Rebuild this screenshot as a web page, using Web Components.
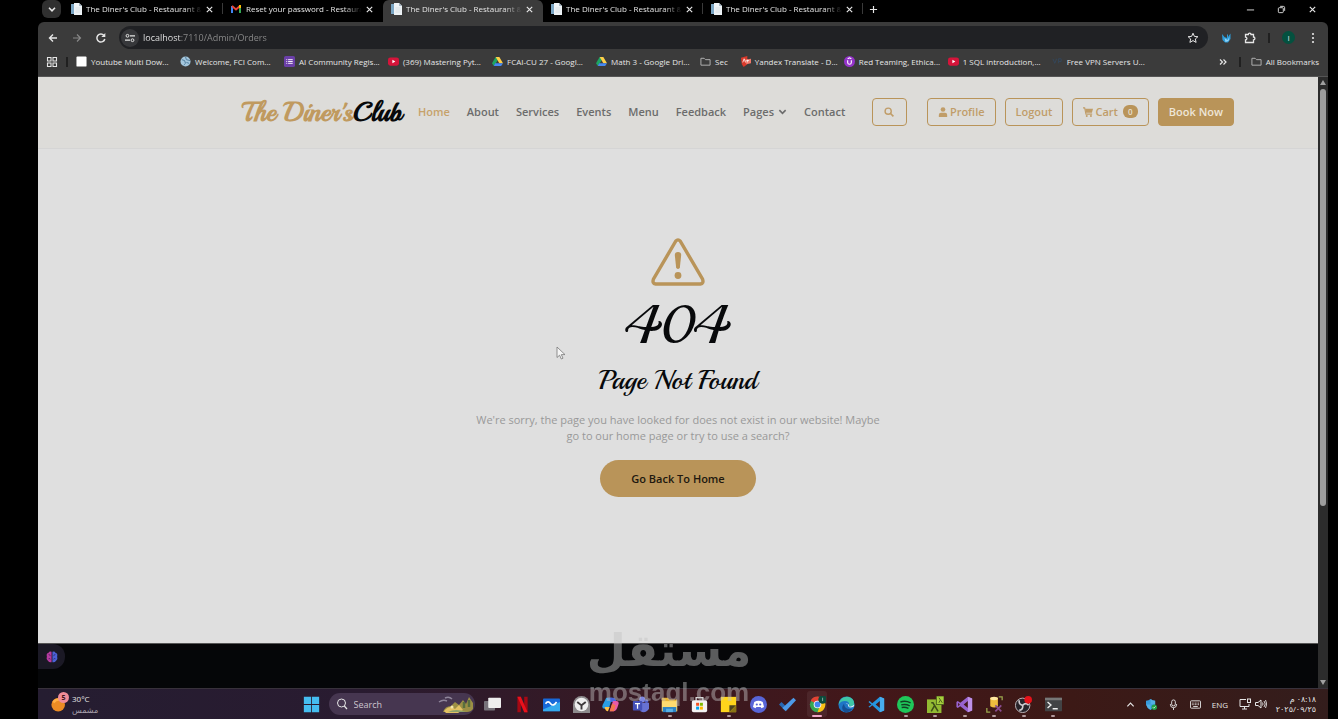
<!DOCTYPE html>
<html lang="en">
<head>
<meta charset="utf-8">
<meta name="viewport" content="width=device-width, initial-scale=1">
<title>The Diner's Club - Restaurant</title>
<style>
  body {
    margin: 0;
    background: #000;
    color: #e6e6e6;
    font-family: "Open Sans", "Noto Sans", sans-serif;
  }
</style>
</head>
<body>
<desktop-screen></desktop-screen>

<script>
const ICONS = {
  chevron: ['0 0 10 10', '<path d="M2.5 4 5 6.5 7.5 4" fill="none" stroke="currentColor" stroke-width="1.3"/>'],
  chevronUp: ['0 0 10 10', '<path d="M1.5 7 5 3.5 8.5 7" fill="none" stroke="currentColor" stroke-width="1.3"/>'],
  close: ['0 0 10 10', '<path d="M2 2l6 6M8 2 2 8" stroke="currentColor" stroke-width="1.3"/>'],
  plus: ['0 0 10 10', '<path d="M5 1v8M1 5h8" stroke="currentColor" stroke-width="1.3"/>'],
  minimize: ['0 0 10 10', '<path d="M1 5.5h8" stroke="currentColor"/>'],
  restore: ['0 0 10 10', '<rect x="1.5" y="3" width="5.500" height="5.500" rx="1" fill="none" stroke="currentColor"/><path d="M3.500 1.500H7q1.500 0 1.500 1.500v3.500" fill="none" stroke="currentColor"/>'],
  page: ['0 0 12 12', '<path d="M1 1h3v10H1z" fill="#7ba6c4"/><path d="M4 0h5l3 3v9H4z" fill="#eef3f6"/><path d="M9 0v3h3" fill="#a9bac6"/><path d="M5.500 5h5M5.500 7h5M5.500 9h5" stroke="#cfd8de" stroke-width=".6"/>'],
  gmail: ['0 0 12 12', '<path d="M2 10V3" stroke="#4285f4" stroke-width="2"/><path d="M10 10V3" stroke="#34a853" stroke-width="2"/><path d="M2 3l4 3.500L10 3" fill="none" stroke="#ea4335" stroke-width="2"/><path d="M9 2h2v3H9z" fill="#fbbc04"/>'],
  back: ['0 0 12 12', '<path d="M10 6H2.500M6 2.500 2.500 6 6 9.500" fill="none" stroke="currentColor" stroke-width="1.400"/>'],
  forward: ['0 0 12 12', '<path d="M2 6h7.500M6 2.500 9.500 6 6 9.500" fill="none" stroke="currentColor" stroke-width="1.200"/>'],
  reload: ['0 0 12 12', '<path d="M9.800 7A4 4 0 1 1 9 3.500" fill="none" stroke="currentColor" stroke-width="1.500"/><path d="M10.300 1v4h-4z" fill="currentColor"/>'],
  tune: ['0 0 12 12', '<circle cx="3.500" cy="3.800" r="1.400" fill="none" stroke="currentColor"/><path d="M6 3.800h5M1 8.200h5" stroke="currentColor" stroke-width="1.200"/><circle cx="8.500" cy="8.200" r="1.400" fill="none" stroke="currentColor"/>'],
  star: ['0 0 12 12', '<path d="M6 1.200 7.400 4.400l3.500.3-2.600 2.300.8 3.400L6 8.600l-3.100 1.800.8-3.400L1.100 4.700l3.500-.3z" fill="none" stroke="currentColor"/>'],
  fox: ['0 0 12 12', '<path d="M2 2l2.500 3L7 6V3l1-1v3l2.500-3.500L10.500 7 8 10.500H5L2.500 8z" fill="#2d9cd8"/><path d="M4.500 6l3 2 2-3-1 4-3 1z" fill="#93d3f5"/>'],
  puzzle: ['0 0 12 12', '<path d="M1.500 2.500H4.300A1.300 1.300 0 0 1 7 2.500H9.500V5A1.300 1.300 0 0 1 9.500 7.800V10.500H1.500V8A1.300 1.300 0 0 0 1.500 5.200z" fill="none" stroke="currentColor" stroke-width="1.300"/>'],
  dots: ['0 0 12 12', '<circle cx="6" cy="2" r="1.100" fill="currentColor"/><circle cx="6" cy="6" r="1.100" fill="currentColor"/><circle cx="6" cy="10" r="1.100" fill="currentColor"/>'],
  grid: ['0 0 12 12', '<path d="M1.500 1.500h3.500V5H1.500zM7 1.500h3.500V5H7zM1.500 7h3.500v3.500H1.500zM7 7h3.500v3.500H7z" fill="none" stroke="currentColor" stroke-width="1.100"/>'],
  more: ['0 0 12 12', '<path d="M3 3.500 5.500 6 3 8.500M6.500 3.500 9 6 6.500 8.500" fill="none" stroke="currentColor" stroke-width="1.200"/>'],
  folder: ['0 0 12 12', '<path d="M1 2.500h3.500L6 4h5v6H1z" fill="none" stroke="#b8b8b8"/>'],
  blank: ['0 0 12 12', '<rect x=".5" y=".5" width="11" height="11" rx="1" fill="#fff"/>'],
  globe: ['0 0 12 12', '<circle cx="6" cy="6" r="5.500" fill="#a4c6dc"/><path d="M2 4l3 1 1 3-2 2M6 1l1 3 4 1M7 7l3 1" fill="none" stroke="#4a7899"/>'],
  form: ['0 0 12 12', '<rect width="12" height="12" rx="2" fill="#6b3fa8"/><path d="M2.500 4h1M2.500 6h1M2.500 8h1M4.500 4h5M4.500 6h5M4.500 8h5" stroke="#fff"/>'],
  youtube: ['0 0 12 12', '<rect y="1.500" width="12" height="9" rx="2.500" fill="#d5143a"/><path d="M4.800 4 8 6 4.800 8z" fill="#fff"/>'],
  drive: ['0 0 12 12', '<path d="M4 1h4L4.200 8 2 11 0 8z" fill="#1da462"/><path d="M4 1h4l4 7H8z" fill="#ffcf48"/><path d="M3.500 8H12l-2 3H2z" fill="#4688f1"/>'],
  yandex: ['0 0 12 12', '<path d="M1 2l7-2v9l-4 3-2-3z" fill="#d8392b"/><path d="M5 4l7-1v5l-5 1z" fill="#ef7769"/><path d="M3 7l1.500-4L6 7M8 4v3M7 5h3" fill="none" stroke="#fff" stroke-width=".8"/>'],
  udemy: ['0 0 12 12', '<circle cx="6" cy="6" r="6" fill="#9333c9"/><path d="M4 4.500V7a2 2 0 0 0 4 0V4.500M4 3l2-1 2 1" fill="none" stroke="#fff" stroke-width="1.200"/>'],
  vpn: ['0 0 12 12', '<path d="M1 3l2 5 2-5M7 8V3h3v3H7" fill="none" stroke="#33475c"/>'],
  search: ['0 0 12 12', '<circle cx="5" cy="5" r="3.700" fill="none" stroke="currentColor" stroke-width="1.700"/><path d="M7.500 7.500 11.300 11.300" stroke="currentColor" stroke-width="2"/>'],
  find: ['0 0 12 12', '<circle cx="5.500" cy="5" r="4" fill="none" stroke="currentColor"/><path d="M8.300 8 11 11" stroke="currentColor" stroke-width="1.200"/>'],
  caret: ['0 0 10 10', '<path d="M1.500 3.500 5 7l3.500-3.500" fill="none" stroke="currentColor" stroke-width="1.800"/>'],
  user: ['0 0 12 12', '<circle cx="6" cy="3" r="2.800" fill="currentColor"/><path d="M1 12v-2.500Q1 7 3.500 7h5Q11 7 11 9.500V12z" fill="currentColor"/>'],
  cart: ['0 0 12 12', '<path d="M0 1h2l1.500 7.500H11" fill="none" stroke="currentColor" stroke-width="1.300"/><path d="M2.500 2H12l-1.300 5H3.500z" fill="currentColor"/><circle cx="4.500" cy="10.700" r="1.200" fill="currentColor"/><circle cx="9.500" cy="10.700" r="1.200" fill="currentColor"/>'],
  warning: ['0 0 54 48', '<path d="M24.700 3.200q2.300-2.600 4.600 0l22.300 38q1.400 4.300-2.200 4.800H4.600Q1 45.500 2.400 41.200z" fill="none" stroke="currentColor" stroke-width="3.400"/><path d="M23.800 17q0-3 3.200-3t3.200 3l-1.300 12.200q-.3 1.800-1.900 1.800t-1.900-1.800z" fill="currentColor"/><circle cx="27" cy="37.500" r="3.400" fill="currentColor"/>'],
  cursor: ['0 0 10 14', '<path d="M1 1v10.500l2.600-2.300 1.700 3.800 1.700-.8-1.700-3.600H9z" fill="#f5f5f5" stroke="#777" stroke-width=".8"/>'],
  brain: ['0 0 14 14', '<path d="M6.500 1Q4 0 3 2 0 3 1 6q-1 3 1 5 2 3 4.500 2z" fill="#b63aa0"/><path d="M7.500 1Q10 0 11 2q3 1 2 4 1 3-1 5-2 3-4.500 2z" fill="#4b62d6"/><path d="M3 4q2 0 2 2M3 9q2-1 2 1M11 4q-2 0-2 2M11 9q-2-1-2 1" fill="none" stroke="#2b1c4c" stroke-width=".7"/>'],
  windows: ['0 0 20 20', '<path d="M1 1h8.500v8.500H1zM10.500 1H19v8.500h-8.500zM1 10.500h8.500V19H1zM10.500 10.500H19V19h-8.500z" fill="#45bdf0"/>'],
  island: ['0 0 36 18', '<path d="M5 17q2-6 8-6l4-4 4 3 4-5 3 4 3-7 2 3 2 3v6q-2 3-6 3z" fill="#9c8f45"/><path d="M6 16q6-7 11-2l4-4 4 5-5 3H8z" fill="#e2c163"/><path d="M10 17q8-4 18 0z" fill="#8fa36a"/><path d="M1 7q4-3 8-1M7 3q4-2 7 1" stroke="#8f859a" stroke-width="1.500" fill="none"/><path d="M26 7v6M31 5v7" stroke="#596f3e" stroke-width="2.500"/><circle cx="14" cy="12" r="1.500" fill="#f4e5ad"/>'],
  taskview: ['0 0 20 20', '<rect x="0" y="6" width="13" height="11" rx="1" fill="#77727a"/><rect x="5" y="2" width="15" height="12" rx="1" fill="#eee"/>'],
  netflix: ['0 0 20 20', '<path d="M6 1v18M14 1v18" stroke="#a50914" stroke-width="4"/><path d="M4 1h4l8 18h-4z" fill="#ea111c"/>'],
  board: ['0 0 20 20', '<rect x="0" y="3" width="20" height="15" rx="1" fill="#1768d8"/><path d="M0 16 20 7v10q0 1-1 1H1q-1 0-1-1z" fill="#35a9ed"/><path d="M3 9q3-4 6 0 3 4 7-2" fill="none" stroke="#fff" stroke-width="2"/>'],
  clock: ['0 0 20 20', '<path d="M0 10a10 10 0 0 1 20 0v10H0z" fill="#8e8b8d"/><circle cx="10" cy="10" r="8" fill="#eee"/><path d="M10 16v-5L5 7M10 11l5-4" fill="none" stroke="#3d393b" stroke-width="2.200"/>'],
  copilot: ['0 0 20 20', '<path d="M5 2h7l-4 13H3q-4 0-2-5z" fill="#2a9ee5"/><path d="M7 2h6q3 0 4 5h-6z" fill="#4968dd"/><path d="M9 18h5q3 0 5-7 2-5-2-5h-4z" fill="#e85aa8"/><path d="M3 13h6l-2 5Q4 18 3 13z" fill="#ffc247"/><path d="M12 9l-3 9h5l2-7z" fill="#f2774d"/>'],
  teams: ['0 0 20 20', '<circle cx="12" cy="4" r="3.500" fill="#7e86e0"/><circle cx="17" cy="6" r="2.300" fill="#5460c8"/><path d="M8 8h12v7q-4 6-10 3z" fill="#6872d4"/><rect x="1" y="6" width="11" height="11" rx="1" fill="#4450b8"/><path d="M3.500 9h6M6.500 9v6" stroke="#fff" stroke-width="1.500"/>'],
  explorer: ['0 0 20 20', '<path d="M1 2h7l2 2h9v14H1z" fill="#e9b32f"/><path d="M1 6h18v12H1z" fill="#ffdb70"/><path d="M2 13h16v6H2z" fill="#2c83c5"/><path d="M6 15h8v4H6z" fill="#57b1e8"/>'],
  store: ['0 0 20 20', '<path d="M6 6V2h8v4" fill="none" stroke="#ddd" stroke-width="1.500"/><rect x="1" y="5" width="18" height="14" rx="2" fill="#f4f2f2"/><path d="M6 8h3.500v3.500H6z" fill="#f25022"/><path d="M10.500 8H14v3.500h-3.500z" fill="#7fba00"/><path d="M6 12.500h3.500V16H6z" fill="#00a4ef"/><path d="M10.500 12.500H14V16h-3.500z" fill="#ffb900"/>'],
  notes: ['0 0 20 20', '<path d="M1 1h18v18H1z" fill="#ffd51c"/><path d="M11 11h8l-8 8z" fill="#4b4320"/><path d="M19 11v8h-8z" fill="#8a7415"/>'],
  discord: ['0 0 20 20', '<circle cx="10" cy="10" r="10" fill="#5865d8"/><path d="M5 7q5-3 10 0l1.500 6-3 1.500-1-1.500h-5l-1 1.500-3-1.500z" fill="#fff"/><circle cx="8" cy="10" r="1.300" fill="#5865d8"/><circle cx="12" cy="10" r="1.300" fill="#5865d8"/>'],
  todo: ['0 0 20 20', '<path d="M0 10l3-3 5 5-1 5z" fill="#2768b4"/><path d="M4 14l4 4L20 5l-3-3z" fill="#4d9ae8"/>'],
  chrome: ['0 0 20 20', '<circle cx="10" cy="10" r="9" fill="#35a853"/><path d="M2 5.500A9 9 0 0 1 18 5.500L10 10z" fill="#e34133"/><path d="M18 5.500A9 9 0 0 1 10 19l3-8-3-5.500z" fill="#fbc116"/><circle cx="10" cy="10" r="4.500" fill="#f5f5f5"/><circle cx="10" cy="10" r="3.400" fill="#4286ef"/><circle cx="16" cy="4" r="5" fill="#0c4b3c"/><path d="M16 2v4" stroke="#95bbb0"/>'],
  edge: ['0 0 20 20', '<circle cx="10" cy="10" r="9.500" fill="#1f76c6"/><path d="M1 8Q4 0 12 1q7 2 7 8-1 4-6 3 1-6-5-6-5 0-7 4z" fill="#3fc6a7"/><path d="M7 9q1 8 10 6-4 5-9 4-6-4-1-10z" fill="#164f93"/><path d="M9 9q3-1 3 3 2 3 7 0v-2q-3 3-6 2 0-4-4-3z" fill="#d9eef8"/>'],
  vscode: ['0 0 20 20', '<path d="M14 1l5 2v14l-5 2-9-8-3 2.500-1.500-1L4 10 .5 7 2 6l3 2.500zm0 5-5 4 5 4z" fill="#2595df"/><path d="M14 1l5 2v14l-5 2z" fill="#48aced"/>'],
  spotify: ['0 0 20 20', '<circle cx="10" cy="10" r="10" fill="#1fc75a"/><path d="M4 7q6-2 12 1M5 10.500q5-1.500 10 1M5.500 13.500q4-1 8 1" fill="none" stroke="#123f23" stroke-width="1.700"/>'],
  lambda: ['0 0 20 20', '<rect x="0" y="4" width="17" height="16" fill="#93ba32"/><path d="M5 8h2l6 10M9 11l-4 7" fill="none" stroke="#3d4d19" stroke-width="1.800"/><rect x="11" y="0" width="9" height="10" fill="#a8cf3d" stroke="#465b1a"/><path d="M14 2l4 6M15.500 5 14 8" stroke="#3d4d19"/>'],
  visualstudio: ['0 0 20 20', '<path d="M14 1l5 2v14l-5 2-9-7-3 2-1.500-1V7L2 6l3 2zm0 5-5 4 5 4zM2.500 8v4l2-2z" fill="#9863cf"/><path d="M14 1l5 2v14l-5 2z" fill="#be91e8"/>'],
  ssms: ['0 0 20 20', '<path d="M5 2h9v10q-4 3-9 0z" fill="#f0bd3e"/><ellipse cx="9.500" cy="3" rx="4.500" ry="2" fill="#ffe7a0"/><path d="M1 14v5h4M15 1h4v4" fill="none" stroke="#9ca84d" stroke-width="1.500"/><path d="M11 11l7 7M18 11l-7 7" stroke="#8a4d91" stroke-width="2"/>'],
  obs: ['0 0 20 20', '<circle cx="9" cy="11" r="8.500" fill="#28242a" stroke="#cfcacf"/><path d="M9 11q-5-1-4-6M9 11q4-4 7 0M9 11q1 5-4 6" fill="none" stroke="#cfcacf" stroke-width="2"/><circle cx="15.500" cy="4.500" r="4.500" fill="#e5121a"/>'],
  terminal: ['0 0 20 20', '<rect x="0" y="2" width="20" height="16" rx="1" fill="#424345"/><path d="M0 2h20v3H0z" fill="#777"/><path d="M3 7l4 3.500L3 14M9 15h6" fill="none" stroke="#eee" stroke-width="1.600"/>'],
  shield: ['0 0 12 12', '<path d="M0 2q3 0 5-2 2 2 5 2v4q-1 4-5 6Q1 10 0 6z" fill="#369bdc"/><path d="M5 0v12Q1 10 0 6h10V2Q7 2 5 0z" fill="#65bde9" opacity=".6"/><circle cx="9" cy="9" r="3" fill="#20a047"/><path d="M7.500 9l1 1 2-2" fill="none" stroke="#fff" stroke-width=".8"/>'],
  mic: ['0 0 12 12', '<rect x="4" y="1" width="4" height="6.500" rx="2" fill="none" stroke="currentColor"/><path d="M2.500 5.500q0 4 3.500 4t3.500-4M6 9.500V12" fill="none" stroke="currentColor"/>'],
  keyboard: ['0 0 12 12', '<rect x=".5" y="2" width="11" height="8" rx="1" fill="none" stroke="currentColor"/><path d="M2 4.500h8M2 6.200h8" stroke="currentColor" stroke-dasharray="1 .7"/><path d="M3.500 8.200h5" stroke="currentColor"/>'],
  network: ['0 0 12 12', '<path d="M7 1.500H1v7h9V6M3 11h5M5.500 8.500V11" fill="none" stroke="currentColor"/><rect x="8.500" y="1" width="3" height="3.500" fill="none" stroke="currentColor"/>'],
  speaker: ['0 0 12 12', '<path d="M.5 4.500H3L6 2v8L3 7.500H.5z" fill="none" stroke="currentColor"/><path d="M7.500 4.500q1 1.500 0 3M9 3q2.500 3 0 6M10.500 2q2.500 4 0 8" fill="none" stroke="currentColor" stroke-width=".9"/>'],
  sun: ['0 0 20 20', '<circle cx="9" cy="11" r="8.500" fill="#ec8c24"/><path d="M3 8q4-5 10-3" stroke="#ffb045" stroke-width="3" fill="none"/>'],
};

const BASE = `
  :host, a, button, input, nav, div, h1, h2, p {
    box-sizing: border-box;
  }
  button, input, h1, h2, p {
    margin: 0;
    padding: 0;
  }
  a {
    color: inherit;
    text-decoration: none;
  }
  button {
    border: 0;
    background: none;
    color: inherit;
    font: inherit;
  }
`;

class AppIcon extends HTMLElement {
  constructor() {
    super();
    this.attachShadow({mode: 'open'});
  }

  connectedCallback() {
    const [viewBox, shapes] = ICONS[this.getAttribute('name')];
    this.shadowRoot.innerHTML = `
    <style>
      :host {
        display: block;
        flex: none;
        width: 12px;
        height: 12px;
      }
      svg {
        display: block;
        width: 100%;
        height: 100%;
      }
    </style>
    <svg viewBox="${viewBox}" aria-hidden="true">${shapes}</svg>
    `;
  }
}

customElements.define('app-icon', AppIcon);

class BrowserTab extends HTMLElement {
  constructor() {
    super();
    this.attachShadow({mode: 'open'});
  }

  connectedCallback() {
    this.shadowRoot.innerHTML = `
    <style>
      ${BASE}
      :host {
        display: flex;
        flex: 0 1 160px;
        min-width: 0;
        align-items: center;
        gap: 4px;
        height: 22px;
        padding: 0 8px 4px 7px;
        border-right: 1px solid transparent;
      }
      :host([divided]) {
        border-image: linear-gradient(transparent 4px, #3a3a3a 4px, #3a3a3a 14px, transparent 14px) 1;
      }
      :host([active]) {
        background: #3b3b3b;
        border-radius: 6px 6px 0 0;
      }
      a {
        flex: 1;
        overflow: hidden;
        white-space: nowrap;
        line-height: 16px;
        mask-image: linear-gradient(90deg, #000 98px, transparent 116px);
      }
      button app-icon {
        width: 9px;
        height: 9px;
      }
    </style>
    <app-icon name="${this.getAttribute('icon')}"></app-icon>
    <a href="#"><slot></slot></a>
    <button aria-label="Close tab"><app-icon name="close"></app-icon></button>
    `;
  }
}

customElements.define('browser-tab', BrowserTab);

class BookmarkLink extends HTMLElement {
  constructor() {
    super();
    this.attachShadow({mode: 'open'});
  }

  connectedCallback() {
    this.shadowRoot.innerHTML = `
    <style>
      ${BASE}
      :host {
        flex: 0 0 92px;
        min-width: 0;
      }
      :host([short]) {
        flex-basis: auto;
      }
      a {
        display: flex;
        align-items: center;
        gap: 4px;
        white-space: nowrap;
      }
      app-icon {
        width: 11px;
        height: 11px;
      }
    </style>
    <a href="#"><app-icon name="${this.getAttribute('icon')}"></app-icon><span><slot></slot></span></a>
    `;
  }
}

customElements.define('bookmark-link', BookmarkLink);

class BrowserChrome extends HTMLElement {
  constructor() {
    super();
    this.attachShadow({mode: 'open'});
  }

  connectedCallback() {
    this.shadowRoot.innerHTML = `
    <style>
      ${BASE}
      :host {
        display: block;
        font-size: 8px;
      }
      .tabs {
        display: flex;
        height: 22px;
        padding-left: 4px;
      }
      .list {
        display: grid;
        place-items: center;
        width: 19px;
        height: 18px;
        margin-right: 2px;
        border-radius: 6px;
        background: #303030;
      }
      .new {
        padding: 0 6px 4px;
      }
      .new app-icon, .window app-icon {
        width: 9px;
        height: 9px;
      }
      .window {
        display: flex;
        gap: 22px;
        margin-left: auto;
        padding: 0 11px 4px 0;
      }
      .toolbar {
        background: #3b3b3b;
        border-radius: 6px 6px 0 0;
        border-bottom: 1px solid #555;
      }
      .row {
        display: flex;
        align-items: center;
        padding: 4px 9px 0;
        gap: 12px;
      }
      .dim {
        color: #888;
      }
      .address {
        display: flex;
        flex: 1;
        align-items: center;
        gap: 4px;
        height: 23px;
        padding: 0 9px 0 2px;
        border-radius: 12px;
        background: #202124;
      }
      .site {
        display: grid;
        place-items: center;
        width: 18px;
        height: 18px;
        border-radius: 50%;
        background: #37383b;
      }
      input {
        flex: 1;
        border: 0;
        outline: 0;
        font: 9px "Open Sans", sans-serif;
        color: transparent;
        background: linear-gradient(90deg, #eee 38px, #8c8c8c 38px);
        background-clip: text;
        -webkit-background-clip: text;
      }
      .avatar {
        width: 13px;
        height: 13px;
        border-radius: 50%;
        background: #04513f;
        line-height: 13px;
        text-align: center;
      }
      .line {
        width: 2px;
        height: 10px;
        background: #202020;
      }
      .bookmarks {
        display: flex;
        align-items: center;
        gap: 12px;
        height: 27px;
        padding: 0 9px 2px 8px;
      }
      .bookmarks .line {
        margin: 0 -4px;
      }
      .end {
        display: flex;
        align-items: center;
        gap: 14px;
        margin-left: auto;
      }
    </style>
    <nav class="tabs" aria-label="Tabs">
      <button class="list" aria-label="Search tabs"><app-icon name="chevron"></app-icon></button>
      <browser-tab icon="page" divided>The Diner's Club - Restaurant &amp;</browser-tab>
      <browser-tab icon="gmail">Reset your password - Restaura</browser-tab>
      <browser-tab icon="page" active>The Diner's Club - Restaurant &amp;</browser-tab>
      <browser-tab icon="page" divided>The Diner's Club - Restaurant &amp;</browser-tab>
      <browser-tab icon="page" divided>The Diner's Club - Restaurant &amp;</browser-tab>
      <button class="new" aria-label="New tab"><app-icon name="plus"></app-icon></button>
      <div class="window">
        <button aria-label="Minimize"><app-icon name="minimize"></app-icon></button>
        <button aria-label="Restore"><app-icon name="restore"></app-icon></button>
        <button aria-label="Close"><app-icon name="close"></app-icon></button>
      </div>
    </nav>
    <div class="toolbar">
      <div class="row">
        <button aria-label="Back"><app-icon name="back"></app-icon></button>
        <button class="dim" aria-label="Forward"><app-icon name="forward"></app-icon></button>
        <button aria-label="Reload"><app-icon name="reload"></app-icon></button>
        <div class="address">
          <button class="site" aria-label="Site information"><app-icon name="tune"></app-icon></button>
          <input type="text" aria-label="Address" value="localhost:7110/Admin/Orders">
          <button aria-label="Bookmark this page"><app-icon name="star"></app-icon></button>
        </div>
        <button aria-label="Extension"><app-icon name="fox"></app-icon></button>
        <button aria-label="Extensions"><app-icon name="puzzle"></app-icon></button>
        <span class="line"></span>
        <button class="avatar" aria-label="Account">I</button>
        <button aria-label="Menu"><app-icon name="dots"></app-icon></button>
      </div>
      <nav class="bookmarks" aria-label="Bookmarks">
        <app-icon name="grid"></app-icon>
        <span class="line"></span>
        <bookmark-link icon="blank">Youtube Multi Dow...</bookmark-link>
        <bookmark-link icon="globe">Welcome, FCI Com...</bookmark-link>
        <bookmark-link icon="form">AI Community Regis...</bookmark-link>
        <bookmark-link icon="youtube">(369) Mastering Pyt...</bookmark-link>
        <bookmark-link icon="drive">FCAI-CU 27 - Googl...</bookmark-link>
        <bookmark-link icon="drive">Math 3 - Google Dri...</bookmark-link>
        <bookmark-link icon="folder" short>Sec</bookmark-link>
        <bookmark-link icon="yandex">Yandex Translate - D...</bookmark-link>
        <bookmark-link icon="udemy">Red Teaming, Ethica...</bookmark-link>
        <bookmark-link icon="youtube">1 SQL introduction,...</bookmark-link>
        <bookmark-link icon="vpn">Free VPN Servers U...</bookmark-link>
        <div class="end">
          <button aria-label="More bookmarks"><app-icon name="more"></app-icon></button>
          <span class="line"></span>
          <bookmark-link icon="folder" short>All Bookmarks</bookmark-link>
        </div>
      </nav>
    </div>
    `;
  }
}

customElements.define('browser-chrome', BrowserChrome);

class SiteHeader extends HTMLElement {
  constructor() {
    super();
    this.attachShadow({mode: 'open'});
  }

  connectedCallback() {
    this.shadowRoot.innerHTML = `
    <style>
      ${BASE}
      :host {
        display: flex;
        align-items: center;
        height: 72px;
        padding: 0 84px 2px 204px;
        background: #dddcd9;
        border-bottom: 1px solid #d5d5d5;
        color: #6c6c6c;
        font-size: 11px;
        font-weight: 600;
        white-space: nowrap;
      }
      .logo {
        margin-right: 16px;
        color: #c09a5f;
        font: bold 27px "Playball", "Liberation Serif", serif;
      }
      .logo span {
        color: #08090b;
      }
      nav {
        display: flex;
        gap: 17px;
      }
      nav a {
        display: flex;
        align-items: center;
        gap: 4px;
      }
      nav app-icon {
        width: 9px;
        height: 9px;
      }
      .current {
        color: #c6a26b;
      }
      .actions {
        display: flex;
        gap: 9px;
        margin-left: auto;
      }
      .actions button {
        display: flex;
        align-items: center;
        gap: 2px;
        height: 28px;
        padding: 0 10px;
        border: 1px solid #b99459;
        border-radius: 4px;
        color: #c09d69;
      }
      .actions .find {
        width: 35px;
        justify-content: center;
        margin-right: 11px;
      }
      .actions app-icon {
        width: 10px;
        height: 10px;
      }
      .badge {
        min-width: 15px;
        margin-left: 3px;
        border-radius: 6px;
        background: #b99459;
        color: #e8e0d2;
        font-size: 8px;
        line-height: 13px;
        text-align: center;
      }
      .actions .book {
        background: #b99459;
        color: #eee6d8;
      }
    </style>
    <a class="logo" href="#">The Diner's<span>Club</span></a>
    <nav>
      <a class="current" href="#">Home</a>
      <a href="#">About</a>
      <a href="#">Services</a>
      <a href="#">Events</a>
      <a href="#">Menu</a>
      <a href="#">Feedback</a>
      <a href="#">Pages <app-icon name="caret"></app-icon></a>
      <a href="#">Contact</a>
    </nav>
    <div class="actions">
      <button class="find" aria-label="Search"><app-icon name="search"></app-icon></button>
      <button><app-icon name="user"></app-icon>Profile</button>
      <button>Logout</button>
      <button><app-icon name="cart"></app-icon>Cart <span class="badge">0</span></button>
      <button class="book">Book Now</button>
    </div>
    `;
  }
}

customElements.define('site-header', SiteHeader);

class NotFound extends HTMLElement {
  constructor() {
    super();
    this.attachShadow({mode: 'open'});
  }

  connectedCallback() {
    this.shadowRoot.innerHTML = `
    <style>
      ${BASE}
      :host {
        display: flex;
        flex: 1;
        flex-direction: column;
        align-items: center;
        padding-top: 89px;
        color: #08090b;
        text-align: center;
      }
      app-icon {
        width: 54px;
        height: 48px;
        color: #b99459;
      }
      h1, h2 {
        font-family: "Playball", "Liberation Serif", serif;
        font-weight: 400;
      }
      h1 {
        margin-top: 4px;
        font-size: 54px;
        line-height: 72px;
      }
      h2 {
        margin-top: 2px;
        font-size: 27px;
        line-height: 32px;
      }
      p {
        max-width: 410px;
        margin: 16px 0;
        color: #999;
        font-size: 11px;
        line-height: 16px;
      }
      a {
        padding: 0 31px;
        border-radius: 19px;
        background: #b99459;
        color: #21180f;
        font-size: 11px;
        font-weight: 600;
        line-height: 37px;
      }
    </style>
    <app-icon name="warning"></app-icon>
    <h1>404</h1>
    <h2>Page Not Found</h2>
    <p>We're sorry, the page you have looked for does not exist in our website! Maybe go to our home page or try to use a search?</p>
    <a href="#">Go Back To Home</a>
    `;
  }
}

customElements.define('not-found', NotFound);

class ScrollTrack extends HTMLElement {
  constructor() {
    super();
    this.attachShadow({mode: 'open'});
  }

  connectedCallback() {
    this.shadowRoot.innerHTML = `
    <style>
      :host {
        display: flex;
        box-sizing: border-box;
        flex: 0 0 10px;
        flex-direction: column;
        align-items: center;
        gap: 4px;
        padding: 3px 0;
        background: #2c2c2c;
      }
      i {
        border: 3px solid transparent;
        border-top: 0;
        border-bottom: 5px solid #a0a0a0;
      }
      i:last-child {
        margin-top: auto;
        border-top: 5px solid #a0a0a0;
        border-bottom: 0;
      }
      div {
        width: 6px;
        height: 69%;
        border-radius: 3px;
        background: #9d9d9d;
      }
    </style>
    <i></i><div></div><i></i>
    `;
  }
}

customElements.define('scroll-track', ScrollTrack);

class TaskbarApp extends HTMLElement {
  constructor() {
    super();
    this.attachShadow({mode: 'open'});
  }

  connectedCallback() {
    this.shadowRoot.innerHTML = `
    <style>
      ${BASE}
      :host {
        display: block;
      }
      button {
        display: flex;
        flex-direction: column;
        align-items: center;
        justify-content: end;
        gap: 2px;
        width: 20px;
        height: 26px;
      }
      app-icon {
        width: 17px;
        height: 17px;
      }
      i {
        width: 4px;
        height: 2px;
        border-radius: 1px;
      }
      :host([running]) i {
        background: #b29a9d;
      }
      :host([focused]) i {
        width: 10px;
        background: #f0a8c8;
      }
      :host([focused]) button {
        background: #ffffff10;
        border-radius: 3px;
      }
    </style>
    <button aria-label="${this.getAttribute('icon')}"><app-icon name="${this.getAttribute('icon')}"></app-icon><i></i></button>
    `;
  }
}

customElements.define('taskbar-app', TaskbarApp);

class TaskBar extends HTMLElement {
  constructor() {
    super();
    this.attachShadow({mode: 'open'});
  }

  connectedCallback() {
    this.shadowRoot.innerHTML = `
    <style>
      ${BASE}
      :host {
        display: grid;
        grid-template-columns: 1fr auto 1fr;
        align-items: center;
        height: 31px;
        border-top: 1px solid #38313b;
        background: linear-gradient(90deg, #251d31, #291b30 25%, #371923 45%, #431719 65%, #3c1916 80%, #331d1c);
        font: 8px "Open Sans", "DejaVu Sans", sans-serif;
      }
      .weather {
        display: flex;
        align-items: center;
        gap: 5px;
        padding-left: 13px;
        line-height: 11px;
      }
      .weather app-icon {
        width: 16px;
        height: 18px;
      }
      .sun {
        position: relative;
      }
      .sun b {
        position: absolute;
        top: -3px;
        right: -2px;
        width: 11px;
        height: 11px;
        border-radius: 50%;
        background: #f08c98;
        color: #3a151b;
        font-size: 7px;
        text-align: center;
      }
      .weather small {
        display: block;
        color: #aaa2ae;
        font-size: 8px;
      }
      .middle {
        display: flex;
        align-items: center;
      }
      .start app-icon {
        width: 17px;
        height: 17px;
      }
      .search {
        display: flex;
        box-sizing: border-box;
        align-items: center;
        gap: 6px;
        width: 146px;
        height: 22px;
        margin: 0 8px 0 9px;
        padding: 0 1px 0 7px;
        border-radius: 11px;
        background: #463650;
      }
      .search input {
        flex: 1;
        min-width: 0;
        border: 0;
        outline: 0;
        background: none;
        color: #ccc;
        font: 9px "Open Sans", sans-serif;
      }
      .search input::placeholder {
        color: #ccc5cf;
      }
      .search .art {
        width: 36px;
        height: 18px;
      }
      .apps {
        display: flex;
        justify-content: space-between;
        width: 581px;
      }
      .tray {
        display: flex;
        align-items: center;
        justify-content: end;
        gap: 11px;
        padding-right: 12px;
      }
      .tray > app-icon {
        width: 11px;
        height: 11px;
      }
      .tray > app-icon:first-child {
        width: 9px;
        height: 9px;
      }
      .sound {
        display: flex;
        gap: 4px;
      }
      time {
        width: 38px;
        line-height: 10px;
      }
      time span {
        display: flex;
        white-space: nowrap;
      }
    </style>
    <div class="weather">
      <div class="sun"><app-icon name="sun"></app-icon><b>5</b></div>
      <div>30°C<small lang="ar">مشمس</small></div>
    </div>
    <div class="middle">
      <button class="start" aria-label="Start"><app-icon name="windows"></app-icon></button>
      <label class="search">
        <app-icon name="find"></app-icon>
        <input type="text" placeholder="Search" aria-label="Search">
        <app-icon class="art" name="island"></app-icon>
      </label>
      <div class="apps">
        <taskbar-app icon="taskview"></taskbar-app>
        <taskbar-app icon="netflix"></taskbar-app>
        <taskbar-app icon="board"></taskbar-app>
        <taskbar-app icon="clock"></taskbar-app>
        <taskbar-app icon="copilot"></taskbar-app>
        <taskbar-app icon="teams"></taskbar-app>
        <taskbar-app icon="explorer" running></taskbar-app>
        <taskbar-app icon="store"></taskbar-app>
        <taskbar-app icon="notes" running></taskbar-app>
        <taskbar-app icon="discord"></taskbar-app>
        <taskbar-app icon="todo"></taskbar-app>
        <taskbar-app icon="chrome" running focused></taskbar-app>
        <taskbar-app icon="edge"></taskbar-app>
        <taskbar-app icon="vscode"></taskbar-app>
        <taskbar-app icon="spotify" running></taskbar-app>
        <taskbar-app icon="lambda" running></taskbar-app>
        <taskbar-app icon="visualstudio" running></taskbar-app>
        <taskbar-app icon="ssms" running></taskbar-app>
        <taskbar-app icon="obs" running></taskbar-app>
        <taskbar-app icon="terminal" running></taskbar-app>
      </div>
    </div>
    <div class="tray">
      <app-icon name="chevronUp"></app-icon>
      <app-icon name="shield"></app-icon>
      <app-icon name="mic"></app-icon>
      <app-icon name="keyboard"></app-icon>
      <span>ENG</span>
      <div class="sound"><app-icon name="network"></app-icon><app-icon name="speaker"></app-icon></div>
      <time dir="rtl" lang="ar" datetime="2025-09-25T20:18"><span>٠٨:١٨ م</span><span>٢٠٢٥/٠٩/٢٥</span></time>
    </div>
    `;
  }
}

customElements.define('task-bar', TaskBar);

class WaterMark extends HTMLElement {
  constructor() {
    super();
    this.attachShadow({mode: 'open'});
  }

  connectedCallback() {
    this.shadowRoot.innerHTML = `
    <style>
      :host {
        display: flex;
        flex-direction: column;
        align-items: center;
        color: #c4c4c4;
        font: bold 26px/30px "Liberation Sans", sans-serif;
        opacity: 0.45;
        pointer-events: none;
      }
      b {
        font: bold 45px/52px "DejaVu Sans", sans-serif;
      }
    </style>
    <b lang="ar">مستقل</b>
    <span>mostaql.com</span>
    `;
  }
}

customElements.define('water-mark', WaterMark);

class DesktopScreen extends HTMLElement {
  constructor() {
    super();
    this.attachShadow({mode: 'open'});
  }

  connectedCallback() {
    this.shadowRoot.innerHTML = `
    <style>
      ${BASE}
      :host {
        position: relative;
        display: flex;
        flex-direction: column;
        min-height: 100vh;
        padding: 0 10px 0 38px;
        overflow: hidden;
      }
      .view {
        display: flex;
        flex: 1;
      }
      main {
        display: flex;
        flex: 1;
        flex-direction: column;
        min-width: 0;
        background: #dfdfdf;
      }
      footer {
        box-sizing: border-box;
        height: 45px;
        border-top: 1px solid #555;
        background: #050608;
      }
      .assistant {
        display: grid;
        place-items: center;
        width: 27px;
        height: 25px;
        border-radius: 0 12px 12px 0;
        background: #1b1925;
      }
      .pointer {
        position: absolute;
        left: 556px;
        top: 346px;
        width: 10px;
        height: 14px;
      }
      water-mark {
        position: absolute;
        left: 50%;
        bottom: 12px;
        transform: translateX(-50%);
      }
    </style>
    <browser-chrome></browser-chrome>
    <div class="view">
      <main>
        <site-header></site-header>
        <not-found></not-found>
        <footer><button class="assistant" aria-label="Assistant"><app-icon name="brain"></app-icon></button></footer>
      </main>
      <scroll-track></scroll-track>
    </div>
    <task-bar></task-bar>
    <app-icon class="pointer" name="cursor"></app-icon>
    <water-mark></water-mark>
    `;
  }
}

customElements.define('desktop-screen', DesktopScreen);
</script>
</body>
</html>
